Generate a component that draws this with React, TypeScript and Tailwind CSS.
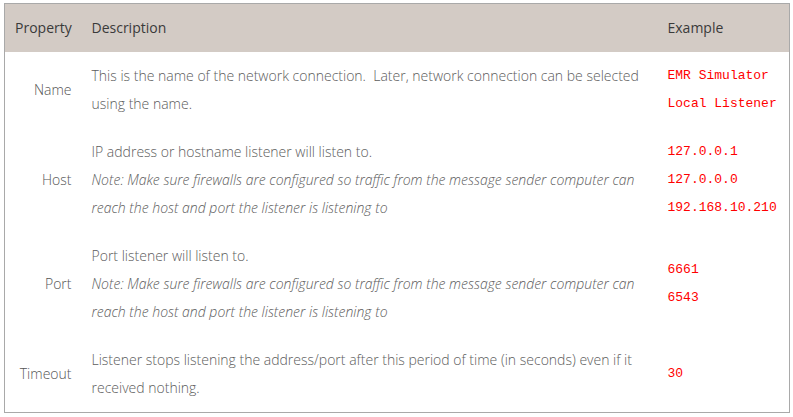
import React from 'react';

interface Row {
  property: string;
  description: React.ReactNode;
  examples: string[];
}

const rows: Row[] = [
  {
    property: 'Name',
    description: (
      <>This is the name of the network connection.&nbsp; Later, network connection can be selected using the name.</>
    ),
    examples: ['EMR Simulator', 'Local Listener'],
  },
  {
    property: 'Host',
    description: (
      <>
        IP address or hostname listener will listen to.
        <br />
        <em>Note: Make sure firewalls are configured so traffic from the message sender computer can reach the host and port the listener is listening to</em>
      </>
    ),
    examples: ['127.0.0.1', '127.0.0.0', '192.168.10.210'],
  },
  {
    property: 'Port',
    description: (
      <>
        Port listener will listen to.
        <br />
        <em>Note: Make sure firewalls are configured so traffic from the message sender computer can reach the host and port the listener is listening to</em>
      </>
    ),
    examples: ['6661', '6543'],
  },
  {
    property: 'Timeout',
    description: (
      <>Listener stops listening the address/port after this period of time (in seconds) even if it received nothing.</>
    ),
    examples: ['30'],
  },
];

const App: React.FC = () => {
  return (
    <div className="bg-white w-[793px] h-[417px] pt-[3px] pl-[4px] font-['Open_Sans',sans-serif] text-[14px] leading-[28px]">
      <table className="w-[786px] border border-[#a9a9a9] border-collapse table-fixed">
        <colgroup>
          <col className="w-[77px]" />
          <col className="w-[576px]" />
          <col />
        </colgroup>
        <thead>
          <tr className="bg-[#d3cbc5] text-[#3a3a3a]">
            <th className="font-normal text-left px-[10px] py-[10px]">Property</th>
            <th className="font-normal text-left px-[10px] py-[10px]">Description</th>
            <th className="font-normal text-left px-[10px] py-[10px]">Example</th>
          </tr>
        </thead>
        <tbody className="font-light">
          {rows.map((row) => (
            <tr key={row.property}>
              <td className="text-right align-middle px-[10px] py-[10px] text-[#555555]">{row.property}</td>
              <td className="align-middle px-[10px] py-[10px] text-[#5c5c5c]">{row.description}</td>
              <td className="align-middle px-[10px] py-[10px]">
                {row.examples.map((ex) => (
                  <div key={ex} className="font-['Liberation_Mono','Courier_New',monospace] font-normal text-[13px] text-[#ff0000] whitespace-nowrap">
                    {ex}
                  </div>
                ))}
              </td>
            </tr>
          ))}
        </tbody>
      </table>
    </div>
  );
};

export default App;
